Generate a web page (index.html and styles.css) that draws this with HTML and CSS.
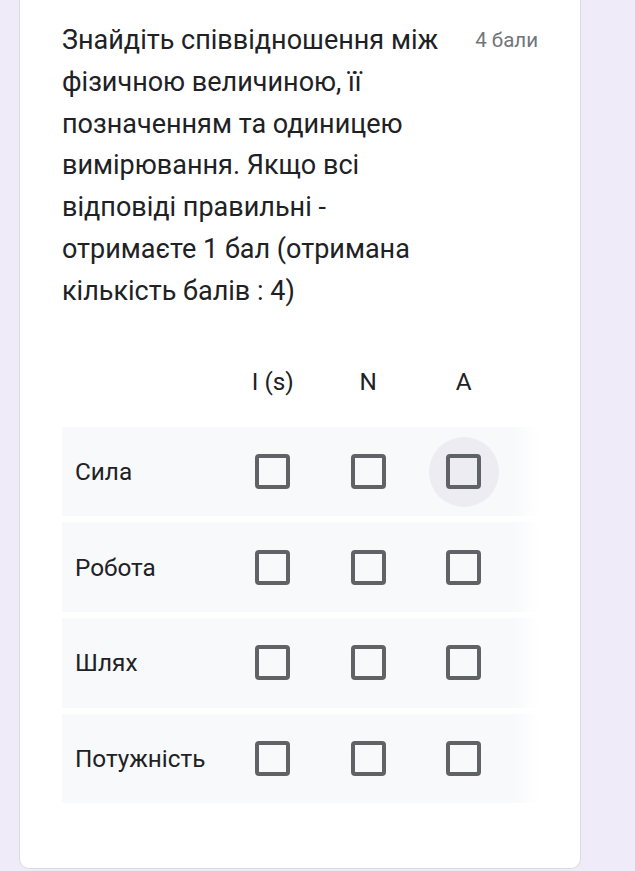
FILE: index.html
```html
<!DOCTYPE html>
<html lang="uk">
<head>
  <meta charset="UTF-8">
  <meta name="viewport" content="width=device-width, initial-scale=1.0">
  <title>Питання</title>
  <link rel="stylesheet" href="styles.css">
</head>
<body>
  <div class="card">
    <div class="question-head">
      <div class="question-title">Знайдіть співвідношення між фізичною величиною, її позначенням та одиницею вимірювання. Якщо всі відповіді правильні - отримаєте 1 бал (отримана кількість балів : 4)</div>
      <div class="points">4 бали</div>
    </div>

    <!-- Grid of checkboxes -->
    <div class="grid">
      <div class="grid-head">
        <div class="row-label"></div>
        <div class="col-label">I (s)</div>
        <div class="col-label">N</div>
        <div class="col-label">A</div>
      </div>
      <div class="grid-row">
        <div class="row-label">Сила</div>
        <div class="cell"><span class="box"></span></div>
        <div class="cell"><span class="box"></span></div>
        <div class="cell hover"><span class="box"></span></div>
        <div class="fade"></div>
      </div>
      <div class="grid-row">
        <div class="row-label">Робота</div>
        <div class="cell"><span class="box"></span></div>
        <div class="cell"><span class="box"></span></div>
        <div class="cell"><span class="box"></span></div>
        <div class="fade"></div>
      </div>
      <div class="grid-row">
        <div class="row-label">Шлях</div>
        <div class="cell"><span class="box"></span></div>
        <div class="cell"><span class="box"></span></div>
        <div class="cell"><span class="box"></span></div>
        <div class="fade"></div>
      </div>
      <div class="grid-row">
        <div class="row-label">Потужність</div>
        <div class="cell"><span class="box"></span></div>
        <div class="cell"><span class="box"></span></div>
        <div class="cell"><span class="box"></span></div>
        <div class="fade"></div>
      </div>
    </div>
  </div>
</body>
</html>
```

FILE: styles.css
```css
:root {
  --page-bg: #f0ebf8;
  --card-bg: #fff;
  --border: #dadce0;
  --text: #202124;
  --muted: #70757a;
  --row-bg: #f8f9fa;
  --box-color: #5f6368;
}
body {
  margin: 0;
  background: var(--page-bg);
  font-family: Roboto, "Noto Sans", Arial, sans-serif;
  color: var(--text);
  height: 871px;
  overflow: hidden;
}
.card {
  box-sizing: border-box;
  margin: -10px 0 0 19px;
  width: 562px;
  height: 879px;
  padding: 30px 42px 0 42px;
  background: var(--card-bg);
  border: 1px solid var(--border);
  border-top: none;
  border-radius: 0 0 10px 10px;
}
.question-head {
  display: flex;
  align-items: flex-start;
  justify-content: space-between;
}
.question-title {
  width: 400px;
  font-size: 27px;
  line-height: 41.8px;
}
.points {
  font-size: 20.5px;
  color: var(--muted);
  line-height: 41.8px;
}
.grid {
  margin-top: 41px;
  display: flex;
  flex-direction: column;
  gap: 6.2px;
}
.grid-head, .grid-row {
  display: flex;
  align-items: center;
  width: 478px;
}
.grid-head {
  height: 56px;
  margin-bottom: 11px;
}
.grid-row {
  height: 89.5px;
  background: var(--row-bg);
}
.row-label {
  box-sizing: border-box;
  width: 163px;
  padding-left: 13px;
  font-size: 24.3px;
}
.col-label, .cell {
  width: 95.5px;
  display: flex;
  justify-content: center;
  align-items: center;
}
.col-label {
  font-size: 24.3px;
}
.cell {
  height: 70px;
}
.cell.hover {
  width: 70px;
  margin: 0 12.75px;
  border-radius: 50%;
  background: #eeecf3;
}
.box {
  box-sizing: border-box;
  width: 35px;
  height: 35px;
  border: 4px solid var(--box-color);
  border-radius: 4px;
}
.fade {
  flex: 1;
  align-self: stretch;
  background: linear-gradient(to right, var(--row-bg), #fff);
}
```
